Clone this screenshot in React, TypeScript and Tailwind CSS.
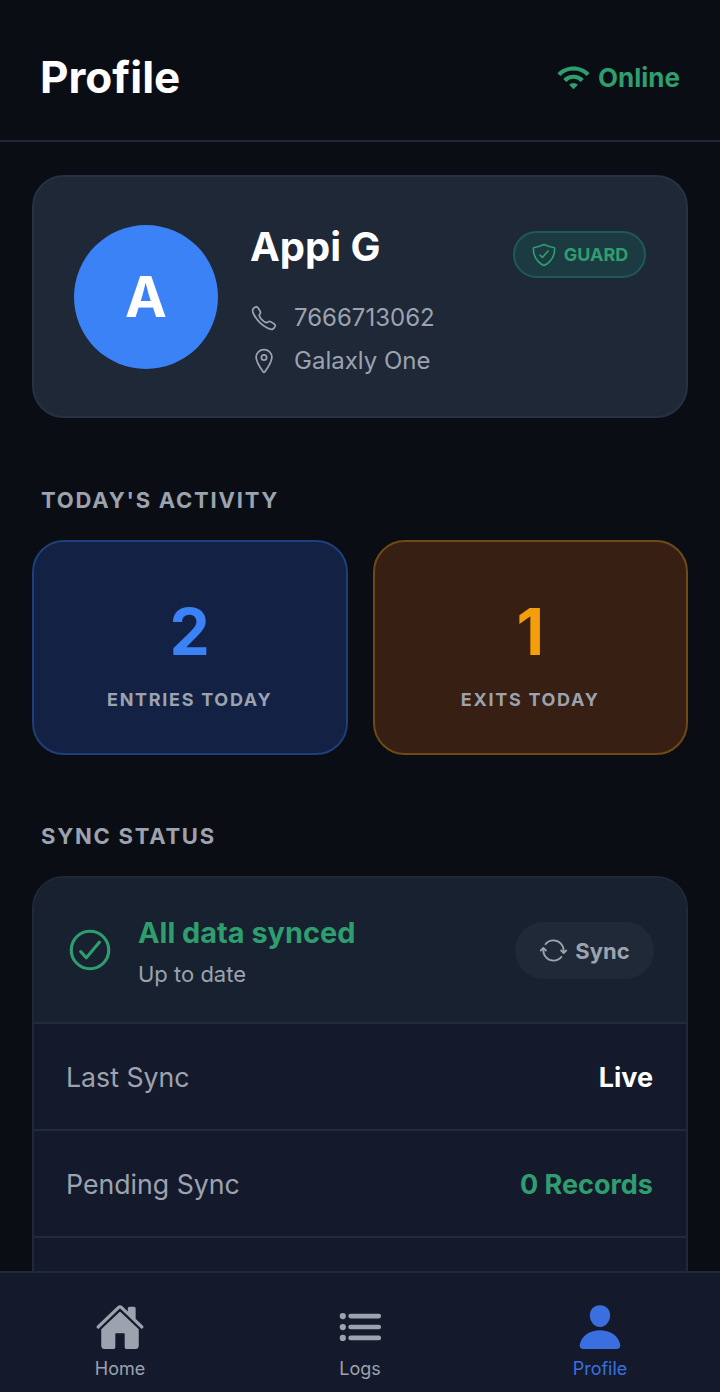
import {
  IoCallOutline,
  IoCheckmarkCircleOutline,
  IoHome,
  IoList,
  IoLocationOutline,
  IoPerson,
  IoShieldCheckmarkOutline,
  IoSyncOutline,
} from "react-icons/io5";
import { MdWifi } from "react-icons/md";

const rows = [
  { label: "Last Sync", value: "Live", tone: "text-white" },
  { label: "Pending Sync", value: "0 Records", tone: "text-[#2f9e6e]" },
];

export default function App() {
  return (
    <div className="h-[1392px] w-[720px] flex flex-col overflow-hidden bg-[#0a0e14] font-['Inter',sans-serif]">
      {/* Header */}
      <header className="h-[142px] shrink-0 flex items-center justify-between pl-[40px] pr-[40px] pt-[14px] border-b-2 border-[#1f2937]">
        <h1 className="text-[44px] leading-none font-bold text-white">Profile</h1>
        <div className="flex items-center gap-[7px]">
          <MdWifi className="w-[35px] h-[35px] text-[#2f9e6e]" />
          <span className="text-[26px] font-bold text-[#2f9e6e]">Online</span>
        </div>
      </header>

      <main className="flex-1 overflow-hidden px-[32px] pt-[33px]">
        {/* User card */}
        <section className="h-[243px] flex items-center px-[40px] rounded-[32px] bg-[#1e2836] border-2 border-[#263243]">
          <div className="w-[144px] h-[144px] shrink-0 rounded-full bg-[#3b82f6] flex items-center justify-center">
            <span className="text-[56px] font-bold text-white">A</span>
          </div>
          <div className="ml-[32px] flex-1 self-start pt-[46px]">
            <div className="flex items-start justify-between">
              <h2 className="text-[40px] leading-[48px] font-bold text-white">Appi G</h2>
              <div className="mt-[8px] h-[47px] w-[133px] rounded-full border-2 border-[#1f5a58] bg-[#1b3a42] flex items-center justify-center gap-[7px]">
                <IoShieldCheckmarkOutline className="w-[26px] h-[26px] text-[#2f9e6e]" />
                <span className="text-[18px] font-bold text-[#2f9e6e]">GUARD</span>
              </div>
            </div>
            <div className="mt-[18px] flex items-center gap-[16px] h-[43px]">
              <IoCallOutline className="w-[28px] h-[28px] text-[#9ca3af]" />
              <span className="text-[24px] text-[#9ca3af]">7666713062</span>
            </div>
            <div className="flex items-center gap-[16px] h-[43px]">
              <IoLocationOutline className="w-[28px] h-[28px] text-[#9ca3af]" />
              <span className="text-[24px] text-[#9ca3af]">Galaxly One</span>
            </div>
          </div>
        </section>

        {/* Activity */}
        <h3 className="mt-[66px] ml-[9px] text-[22px] leading-[32px] font-bold tracking-[1.76px] text-[#9ca3af]">
          TODAY'S ACTIVITY
        </h3>
        <div className="mt-[24px] grid grid-cols-2 gap-[25px]">
          <div className="h-[215px] rounded-[32px] bg-[#132145] border-2 border-[#1e4079] flex flex-col items-center">
            <span className="mt-[54px] text-[64px] leading-[72px] font-bold text-[#3b82f6]">2</span>
            <span className="mt-[20px] text-[18px] leading-[24px] font-bold tracking-[1.7px] text-[#9ca3af]">ENTRIES TODAY</span>
          </div>
          <div className="h-[215px] rounded-[32px] bg-[#371f13] border-2 border-[#6f4a16] flex flex-col items-center">
            <span className="mt-[54px] text-[64px] leading-[72px] font-bold text-[#f59e0b]">1</span>
            <span className="mt-[20px] text-[18px] leading-[24px] font-bold tracking-[1.7px] text-[#9ca3af]">EXITS TODAY</span>
          </div>
        </div>

        {/* Sync */}
        <h3 className="mt-[65px] ml-[9px] text-[22px] leading-[32px] font-bold tracking-[1.76px] text-[#9ca3af]">
          SYNC STATUS
        </h3>
        <section className="mt-[24px] rounded-[32px] bg-[#141a2b] border-2 border-[#1f2937] overflow-hidden">
          <div className="h-[146px] flex items-center justify-between pl-[31px] pr-[32px] bg-[#17212f] border-b-2 border-[#1f2c3c]">
            <div className="flex items-center gap-[23px]">
              <IoCheckmarkCircleOutline className="w-[50px] h-[50px] text-[#2f9e6e]" />
              <div className="pt-[2px]">
                <p className="text-[28.9px] leading-[40px] font-bold text-[#2f9e6e]">All data synced</p>
                <p className="mt-[6px] text-[22px] leading-[30px] text-[#9ca3af]">Up to date</p>
              </div>
            </div>
            <div className="h-[57px] w-[139px] rounded-full bg-[#1f2937] flex items-center justify-center gap-[7px]">
              <IoSyncOutline className="w-[29px] h-[29px] text-[#9ca3af]" />
              <span className="mt-[2px] text-[22px] font-bold text-[#9ca3af]">Sync</span>
            </div>
          </div>
          {rows.map((row) => (
            <div key={row.label} className="h-[107px] pt-[2px] flex items-center justify-between pl-[32px] pr-[33px] border-b-2 border-[#232b3b]">
              <span className="text-[26.7px] text-[#9ca3af]">{row.label}</span>
              <span className={`mt-[2px] text-[27px] font-bold ${row.tone}`}>{row.value}</span>
            </div>
          ))}
          <div className="h-[107px]" />
        </section>
      </main>

      {/* Bottom nav */}
      <nav className="h-[121px] shrink-0 grid grid-cols-3 bg-[#141a2b] border-t-2 border-[#1f2937]">
        <div className="flex flex-col items-center pt-[29px]">
          <IoHome className="w-[50px] h-[50px] text-[#9ca3af]" />
          <span className="mt-[5px] text-[18px] leading-[24px] text-[#9ca3af]">Home</span>
        </div>
        <div className="flex flex-col items-center pt-[29px]">
          <IoList className="w-[50px] h-[50px] text-[#9ca3af]" />
          <span className="mt-[5px] text-[18px] leading-[24px] text-[#9ca3af]">Logs</span>
        </div>
        <div className="flex flex-col items-center pt-[29px]">
          <IoPerson className="w-[50px] h-[50px] text-[#3b6fe0]" />
          <span className="mt-[5px] text-[18px] leading-[24px] text-[#3b6fe0]">Profile</span>
        </div>
      </nav>
    </div>
  );
}
